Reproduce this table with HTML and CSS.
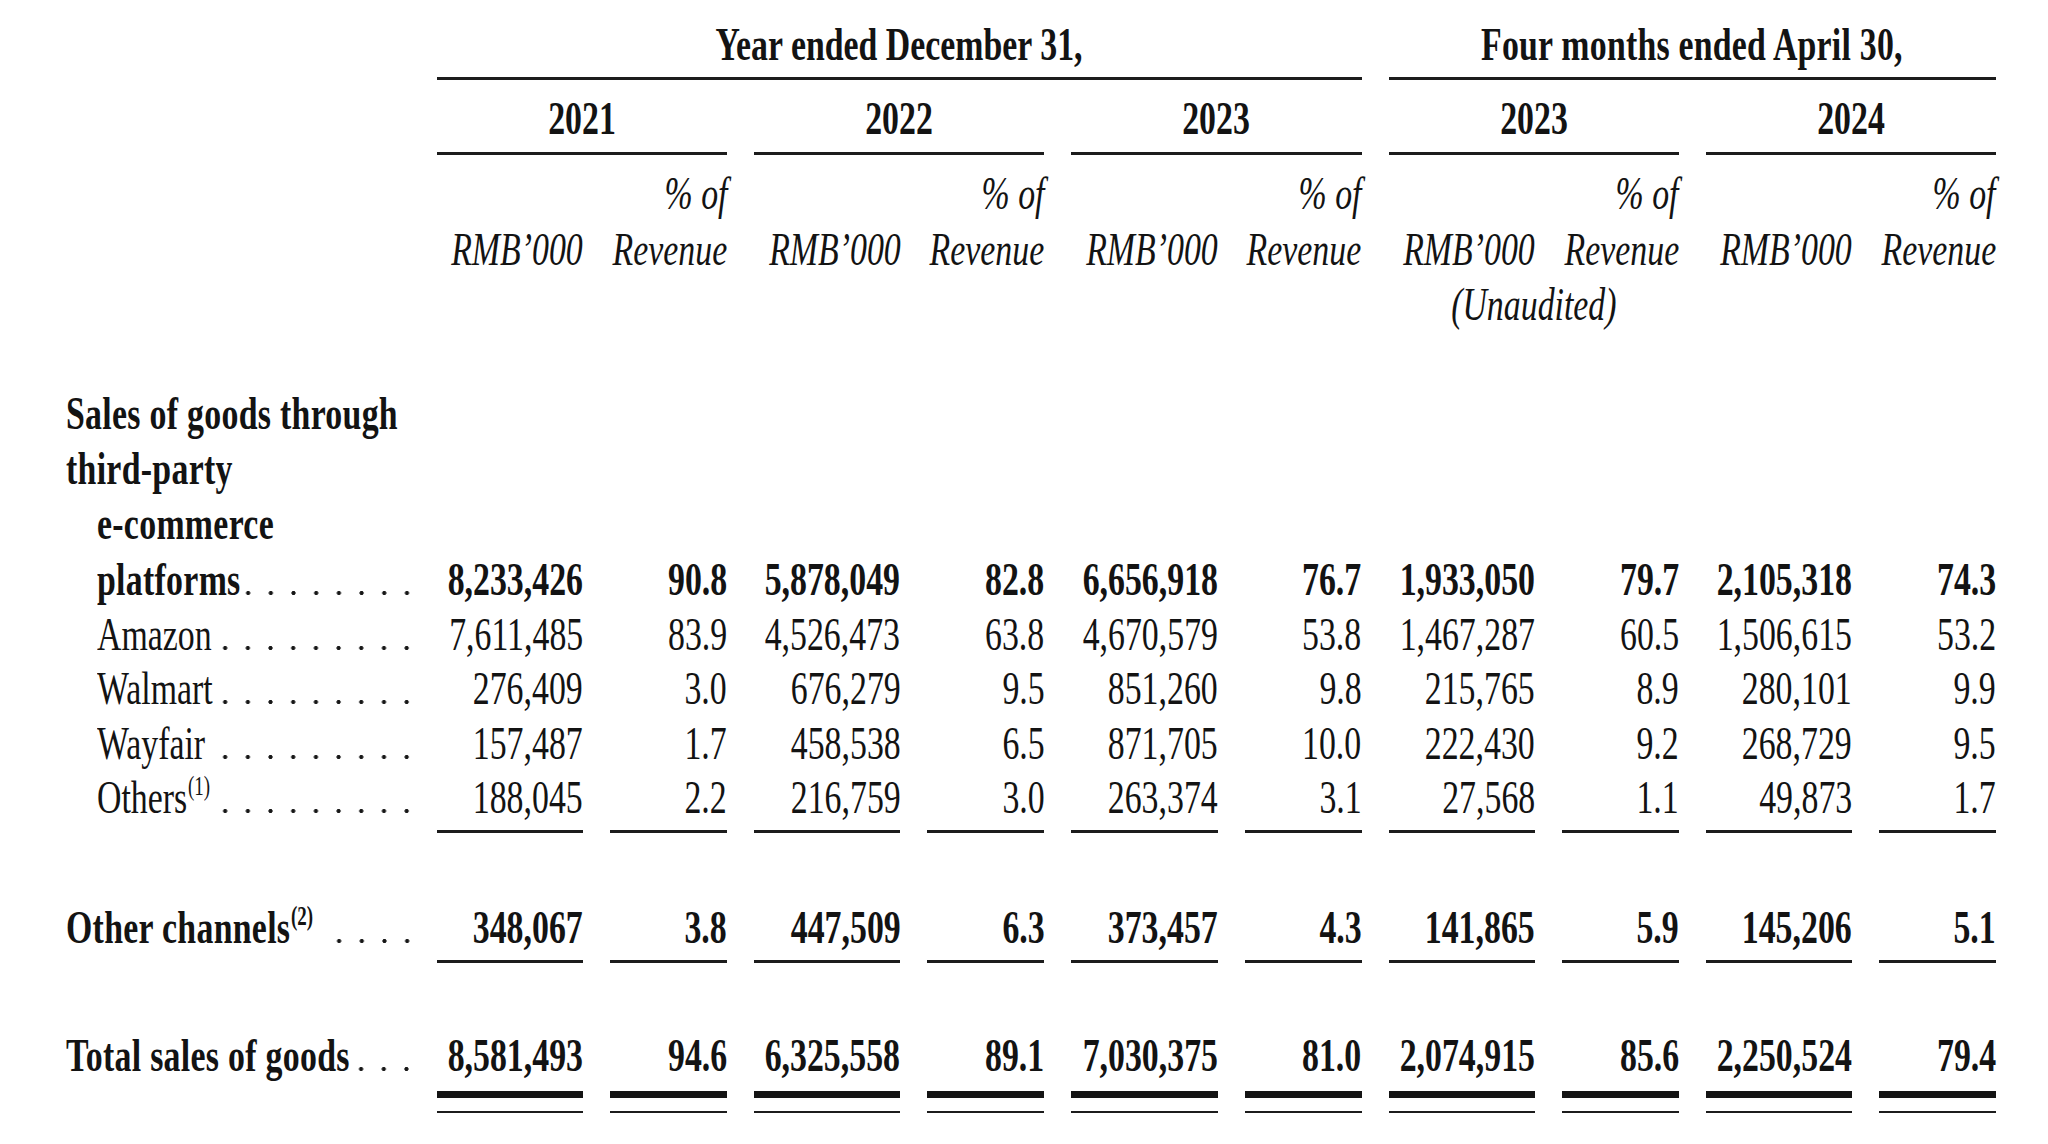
FILE: index.html
```html
<!DOCTYPE html>
<html lang="en">
<head>
<meta charset="utf-8">
<title>Sales of goods by channel</title>
<link rel="stylesheet" href="styles.css">
</head>
<body>
<div class="sheet">
  <div class="row head1">
    <div class="lab"></div>
    <div class="hd hd-year"><span class="t">Year ended December 31,</span></div>
    <div class="hd hd-four"><span class="t">Four months ended April 30,</span></div>
  </div>
  <div class="row head2">
    <div class="lab"></div>
    <div class="yr"><span class="t">2021</span></div>
    <div class="yr"><span class="t">2022</span></div>
    <div class="yr"><span class="t">2023</span></div>
    <div class="yr"><span class="t">2023</span></div>
    <div class="yr"><span class="t">2024</span></div>
  </div>
  <div class="row head3">
    <div class="lab"></div>
    <div></div><div class="c i"><span class="t">% of</span></div>
    <div></div><div class="c i"><span class="t">% of</span></div>
    <div></div><div class="c i"><span class="t">% of</span></div>
    <div></div><div class="c i"><span class="t">% of</span></div>
    <div></div><div class="c i"><span class="t">% of</span></div>
  </div>
  <div class="row head4">
    <div class="lab"></div>
    <div class="c i"><span class="t">RMB’000</span></div><div class="c i"><span class="t">Revenue</span></div>
    <div class="c i"><span class="t">RMB’000</span></div><div class="c i"><span class="t">Revenue</span></div>
    <div class="c i"><span class="t">RMB’000</span></div><div class="c i"><span class="t">Revenue</span></div>
    <div class="c i"><span class="t">RMB’000</span></div><div class="c i"><span class="t">Revenue</span></div>
    <div class="c i"><span class="t">RMB’000</span></div><div class="c i"><span class="t">Revenue</span></div>
  </div>
  <div class="row head5">
    <div class="lab"></div>
    <div class="unaud i"><span class="t">(Unaudited)</span></div>
  </div>

  <div class="row sub1"><div class="lab b"><span class="t">Sales of goods through</span></div></div>
  <div class="row sub2"><div class="lab b"><span class="t">third-party</span></div></div>
  <div class="row sub3"><div class="lab b ind"><span class="t">e-commerce</span></div></div>

  <div class="row r-plat">
    <div class="lab b ind"><span class="t">platforms</span><span class="lead dots-8"></span></div>
    <div class="c b"><span class="t">8,233,426</span></div><div class="c b"><span class="t">90.8</span></div>
    <div class="c b"><span class="t">5,878,049</span></div><div class="c b"><span class="t">82.8</span></div>
    <div class="c b"><span class="t">6,656,918</span></div><div class="c b"><span class="t">76.7</span></div>
    <div class="c b"><span class="t">1,933,050</span></div><div class="c b"><span class="t">79.7</span></div>
    <div class="c b"><span class="t">2,105,318</span></div><div class="c b"><span class="t">74.3</span></div>
  </div>
  <div class="row r-amz">
    <div class="lab ind"><span class="t">Amazon</span><span class="lead dots-9"></span></div>
    <div class="c"><span class="t">7,611,485</span></div><div class="c"><span class="t">83.9</span></div>
    <div class="c"><span class="t">4,526,473</span></div><div class="c"><span class="t">63.8</span></div>
    <div class="c"><span class="t">4,670,579</span></div><div class="c"><span class="t">53.8</span></div>
    <div class="c"><span class="t">1,467,287</span></div><div class="c"><span class="t">60.5</span></div>
    <div class="c"><span class="t">1,506,615</span></div><div class="c"><span class="t">53.2</span></div>
  </div>
  <div class="row r-wal">
    <div class="lab ind"><span class="t">Walmart</span><span class="lead dots-9"></span></div>
    <div class="c"><span class="t">276,409</span></div><div class="c"><span class="t">3.0</span></div>
    <div class="c"><span class="t">676,279</span></div><div class="c"><span class="t">9.5</span></div>
    <div class="c"><span class="t">851,260</span></div><div class="c"><span class="t">9.8</span></div>
    <div class="c"><span class="t">215,765</span></div><div class="c"><span class="t">8.9</span></div>
    <div class="c"><span class="t">280,101</span></div><div class="c"><span class="t">9.9</span></div>
  </div>
  <div class="row r-way">
    <div class="lab ind"><span class="t">Wayfair</span><span class="lead dots-9"></span></div>
    <div class="c"><span class="t">157,487</span></div><div class="c"><span class="t">1.7</span></div>
    <div class="c"><span class="t">458,538</span></div><div class="c"><span class="t">6.5</span></div>
    <div class="c"><span class="t">871,705</span></div><div class="c"><span class="t">10.0</span></div>
    <div class="c"><span class="t">222,430</span></div><div class="c"><span class="t">9.2</span></div>
    <div class="c"><span class="t">268,729</span></div><div class="c"><span class="t">9.5</span></div>
  </div>
  <div class="row r-oth">
    <div class="lab ind"><span class="t">Others<sup class="fn">(1)</sup></span><span class="lead dots-9"></span></div>
    <div class="c ul"><span class="t">188,045</span></div><div class="c ul"><span class="t">2.2</span></div>
    <div class="c ul"><span class="t">216,759</span></div><div class="c ul"><span class="t">3.0</span></div>
    <div class="c ul"><span class="t">263,374</span></div><div class="c ul"><span class="t">3.1</span></div>
    <div class="c ul"><span class="t">27,568</span></div><div class="c ul"><span class="t">1.1</span></div>
    <div class="c ul"><span class="t">49,873</span></div><div class="c ul"><span class="t">1.7</span></div>
  </div>

  <div class="row r-chan">
    <div class="lab b"><span class="t">Other channels<sup class="fn">(2)</sup></span><span class="lead dots-4"></span></div>
    <div class="c b ul"><span class="t">348,067</span></div><div class="c b ul"><span class="t">3.8</span></div>
    <div class="c b ul"><span class="t">447,509</span></div><div class="c b ul"><span class="t">6.3</span></div>
    <div class="c b ul"><span class="t">373,457</span></div><div class="c b ul"><span class="t">4.3</span></div>
    <div class="c b ul"><span class="t">141,865</span></div><div class="c b ul"><span class="t">5.9</span></div>
    <div class="c b ul"><span class="t">145,206</span></div><div class="c b ul"><span class="t">5.1</span></div>
  </div>

  <div class="row r-tot">
    <div class="lab b"><span class="t">Total sales of goods</span><span class="lead dots-3"></span></div>
    <div class="c b tot"><div class="v"><span class="t">8,581,493</span></div></div><div class="c b tot"><div class="v"><span class="t">94.6</span></div></div>
    <div class="c b tot"><div class="v"><span class="t">6,325,558</span></div></div><div class="c b tot"><div class="v"><span class="t">89.1</span></div></div>
    <div class="c b tot"><div class="v"><span class="t">7,030,375</span></div></div><div class="c b tot"><div class="v"><span class="t">81.0</span></div></div>
    <div class="c b tot"><div class="v"><span class="t">2,074,915</span></div></div><div class="c b tot"><div class="v"><span class="t">85.6</span></div></div>
    <div class="c b tot"><div class="v"><span class="t">2,250,524</span></div></div><div class="c b tot"><div class="v"><span class="t">79.4</span></div></div>
  </div>
</div>
</body>
</html>
```

FILE: styles.css
```css
html, body {
  margin: 0;
  padding: 0;
  background: #ffffff;
}

body {
  width: 2048px;
  height: 1144px;
  overflow: hidden;
}

.sheet {
  padding: 20.6px 0 0 66px;
  font-family: "Liberation Serif", "Times New Roman", serif;
  font-size: 47px;
  line-height: 47px;
  color: #131313;
}

.row {
  display: grid;
  grid-template-columns: 344px repeat(5, 146.2px 117px);
  column-gap: 27px;
  align-items: start;
}

/* Condensed Times: each text run is narrowed horizontally */
.t {
  display: inline-block;
  white-space: nowrap;
  transform: scaleX(0.72);
  transform-origin: 0 50%;
}

.lab {
  display: flex;
  justify-content: space-between;
  white-space: nowrap;
}

.lab .t {
  flex: 0 1 auto;
  min-width: 0;
}

.lab.b .t {
  letter-spacing: 0.4px;
}

.ind {
  padding-left: 31px;
}

.c {
  display: flex;
  justify-content: flex-end;
}

.c .t {
  flex-shrink: 0;
  transform-origin: 100% 50%;
}

.b {
  font-weight: 700;
}

.i {
  font-style: italic;
}

/* Header */
.hd,
.yr,
.unaud {
  display: flex;
  justify-content: center;
}

.hd .t,
.yr .t,
.unaud .t {
  flex-shrink: 0;
  transform-origin: 50% 50%;
}

.hd {
  font-weight: 700;
  padding-bottom: 9.4px;
  border-bottom: 3px solid #1c1c1c;
}

.hd-year {
  grid-column: 2 / span 6;
}

.hd-four {
  grid-column: 8 / span 4;
  letter-spacing: 0.3px;
}

.head2 {
  margin-top: 14.6px;
}

.yr {
  grid-column: span 2;
  font-weight: 700;
  padding-bottom: 10.4px;
  border-bottom: 3px solid #1c1c1c;
}

.head3 {
  margin-top: 14.6px;
}

.head4 {
  margin-top: 9px;
}

.head5 {
  margin-top: 8px;
}

.unaud {
  grid-column: 8 / span 2;
}

/* Body rows */
.sub1 { margin-top: 62px; }
.sub2 { margin-top: 8px; }
.sub3 { margin-top: 8px; }
.r-plat { margin-top: 9px; }
.r-amz { margin-top: 8px; }
.r-wal { margin-top: 7px; }
.r-way { margin-top: 8px; }
.r-oth { margin-top: 7px; }
.r-chan { margin-top: 70.6px; }
.r-tot { margin-top: 68.6px; }

/* Dot leaders, anchored to the right edge of the label column */
.lead {
  flex: 0 0 auto;
  height: 47px;
  background-image: radial-gradient(circle at 50% 37px, #161616 1.7px, rgba(22, 22, 22, 0) 2.5px);
  background-size: 22.7px 47px;
  background-repeat: repeat-x;
  background-position: right -8px top 0;
}

.dots-3 { width: 59.8px; }
.dots-4 { width: 82.5px; }
.dots-8 { width: 173.3px; }
.dots-9 { width: 196px; }

.fn {
  font-size: 0.56em;
  line-height: 0;
  vertical-align: 0.65em;
  margin-left: 1px;
  letter-spacing: 0;
}

.ul {
  padding-bottom: 9.4px;
  border-bottom: 3px solid #1c1c1c;
}

.tot {
  display: block;
  padding-bottom: 13px;
  border-bottom: 2px solid #1c1c1c;
}

.tot .v {
  display: flex;
  justify-content: flex-end;
  padding-bottom: 12.4px;
  border-bottom: 7px solid #141414;
}
```
